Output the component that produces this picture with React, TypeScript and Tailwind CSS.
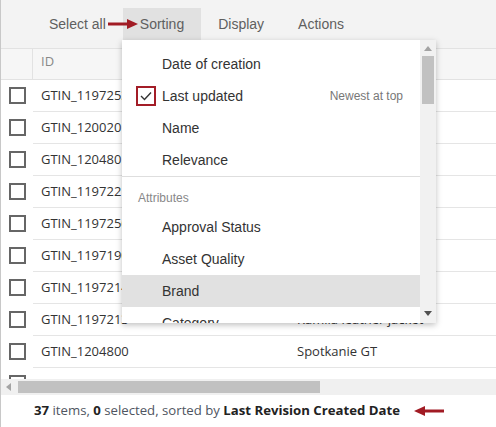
import React from 'react'

// names of rows 1–7 sit behind the open sort menu, so they are left blank
const rows = [
  { id: 'GTIN_1197253', name: '' },
  { id: 'GTIN_1200201', name: '' },
  { id: 'GTIN_1204801', name: '' },
  { id: 'GTIN_1197221', name: '' },
  { id: 'GTIN_1197256', name: '' },
  { id: 'GTIN_1197190', name: '' },
  { id: 'GTIN_1197214', name: '' },
  { id: 'GTIN_1197213', name: 'Kamila leather jacket' },
  { id: 'GTIN_1204800', name: 'Spotkanie GT' },
  { id: '', name: '' },
]

const sortOptions = ['Date of creation', 'Last updated', 'Name', 'Relevance']
const attributes = ['Approval Status', 'Asset Quality', 'Brand', 'Category']

function Arrow({ left = false, className = '' }: { left?: boolean; className?: string }) {
  return (
    <svg className={className} width="30" height="12" viewBox="0 0 30 12">
      {left ? (
        <>
          <path d="M9 6H30" stroke="#a11b24" strokeWidth="3" />
          <path d="M0 6L11 1V11Z" fill="#a11b24" />
        </>
      ) : (
        <>
          <path d="M0 6H21" stroke="#a11b24" strokeWidth="3" />
          <path d="M30 6L19 1V11Z" fill="#a11b24" />
        </>
      )}
    </svg>
  )
}

function Checkbox() {
  return <div className="w-[17px] h-[17px] border-2 border-[#666] bg-white" />
}

function SortMenu() {
  return (
    <div className="absolute left-[121px] top-10 w-[314px] h-[283px] bg-white shadow-[0_2px_6px_rgba(0,0,0,0.25)] flex font-['Liberation_Sans',Arial,sans-serif] text-[14px] text-[#333]">
      <div className="flex-1 overflow-hidden pt-2">
        {sortOptions.map((opt) => (
          <div key={opt} className="h-8 flex items-center pl-10 pr-[17px] relative">
            {opt === 'Last updated' && (
              <div className="absolute left-[14px] top-[6px] w-5 h-5 border-2 border-[#a31d27] flex items-center justify-center">
                <svg width="12" height="10" viewBox="0 0 12 10">
                  <path d="M1 5L4.5 8.5L11 1.5" stroke="#333" strokeWidth="1.4" fill="none" />
                </svg>
              </div>
            )}
            <span className="flex-1">{opt}</span>
            {opt === 'Last updated' && <span className="text-[12px] text-[#777]">Newest at top</span>}
          </div>
        ))}
        <div className="border-t border-[#dedede]" />
        <div className="h-[34px] flex items-center pl-4 pt-[7px] text-[12px] text-[#888]">Attributes</div>
        {attributes.map((a) => (
          <div key={a} className={`h-8 flex items-center pl-10 ${a === 'Brand' ? 'bg-[#e1e1e1]' : ''}`}>
            {a}
          </div>
        ))}
      </div>
      <div className="w-4 bg-[#f1f1f1] flex flex-col items-center">
        <svg className="mt-[6px]" width="8" height="5" viewBox="0 0 8 5">
          <path d="M0 5L4 0L8 5Z" fill="#a3a3a3" />
        </svg>
        <div className="mt-[5px] w-3 h-12 bg-[#c1c1c1]" />
        <div className="flex-1" />
        <svg className="mb-[7px]" width="8" height="5" viewBox="0 0 8 5">
          <path d="M0 0L4 5L8 0Z" fill="#505050" />
        </svg>
      </div>
    </div>
  )
}

export default function App() {
  return (
    <div className="w-[496px] h-[427px] relative overflow-hidden bg-white border-l border-[#c8c8c8] flex flex-col font-['Open_Sans',sans-serif]">
      {/* Toolbar */}
      <div className="h-12 shrink-0 bg-[#f3f3f3] flex items-start pt-2 pl-[31px] font-['Liberation_Sans',Arial,sans-serif] text-[14px] text-[#5f5f5f]">
        <div className="h-8 px-[17px] flex items-center">Select all</div>
        <div className="h-8 px-[17px] flex items-center bg-[#e1e1e1]">Sorting</div>
        <div className="h-8 px-[17px] flex items-center">Display</div>
        <div className="h-8 px-[17px] flex items-center">Actions</div>
      </div>

      {/* Header */}
      <div className="h-8 shrink-0 flex border-t border-b border-[#e2e2e2] bg-[#f6f6f6] text-[13px] text-[#888]">
        <div className="w-8 border-r border-[#e2e2e2]" />
        <div className="flex-1 pl-2 pt-[3px]">ID</div>
      </div>

      {/* Body */}
      <div className="h-[299px] shrink-0 overflow-hidden text-[13px] text-[#333]">
        {rows.map((r, i) => (
          <div key={i} className="h-8 flex">
            <div className="w-8 flex items-center justify-center pb-[2px]">
              <Checkbox />
            </div>
            <div className="flex-1 flex items-center border-b border-[#e5e5e5] pl-2">
              <span className="w-[256px]">{r.id}</span>
              <span>{r.name}</span>
            </div>
          </div>
        ))}
      </div>

      {/* Horizontal scrollbar */}
      <div className="h-4 shrink-0 bg-[#f0f0f0] flex items-center">
        <svg className="ml-[5px]" width="5" height="8" viewBox="0 0 5 8">
          <path d="M5 0L0 4L5 8Z" fill="#a3a3a3" />
        </svg>
        <div className="ml-[7px] w-[302px] h-3 bg-[#c1c1c1]" />
      </div>

      {/* Footer */}
      <div className="flex-1 flex items-center pl-[33px] text-[13.2px] text-[#4f5561]">
        <span>
          <b className="text-[#222]">37</b> items, <b className="text-[#222]">0</b> selected, sorted by{' '}
          <b className="text-[#222]">Last Revision Created Date</b>
        </span>
        <Arrow left className="ml-[10px] w-[38px]" />
      </div>

      <SortMenu />
      <Arrow className="absolute left-[107px] top-[18px]" />
    </div>
  )
}
